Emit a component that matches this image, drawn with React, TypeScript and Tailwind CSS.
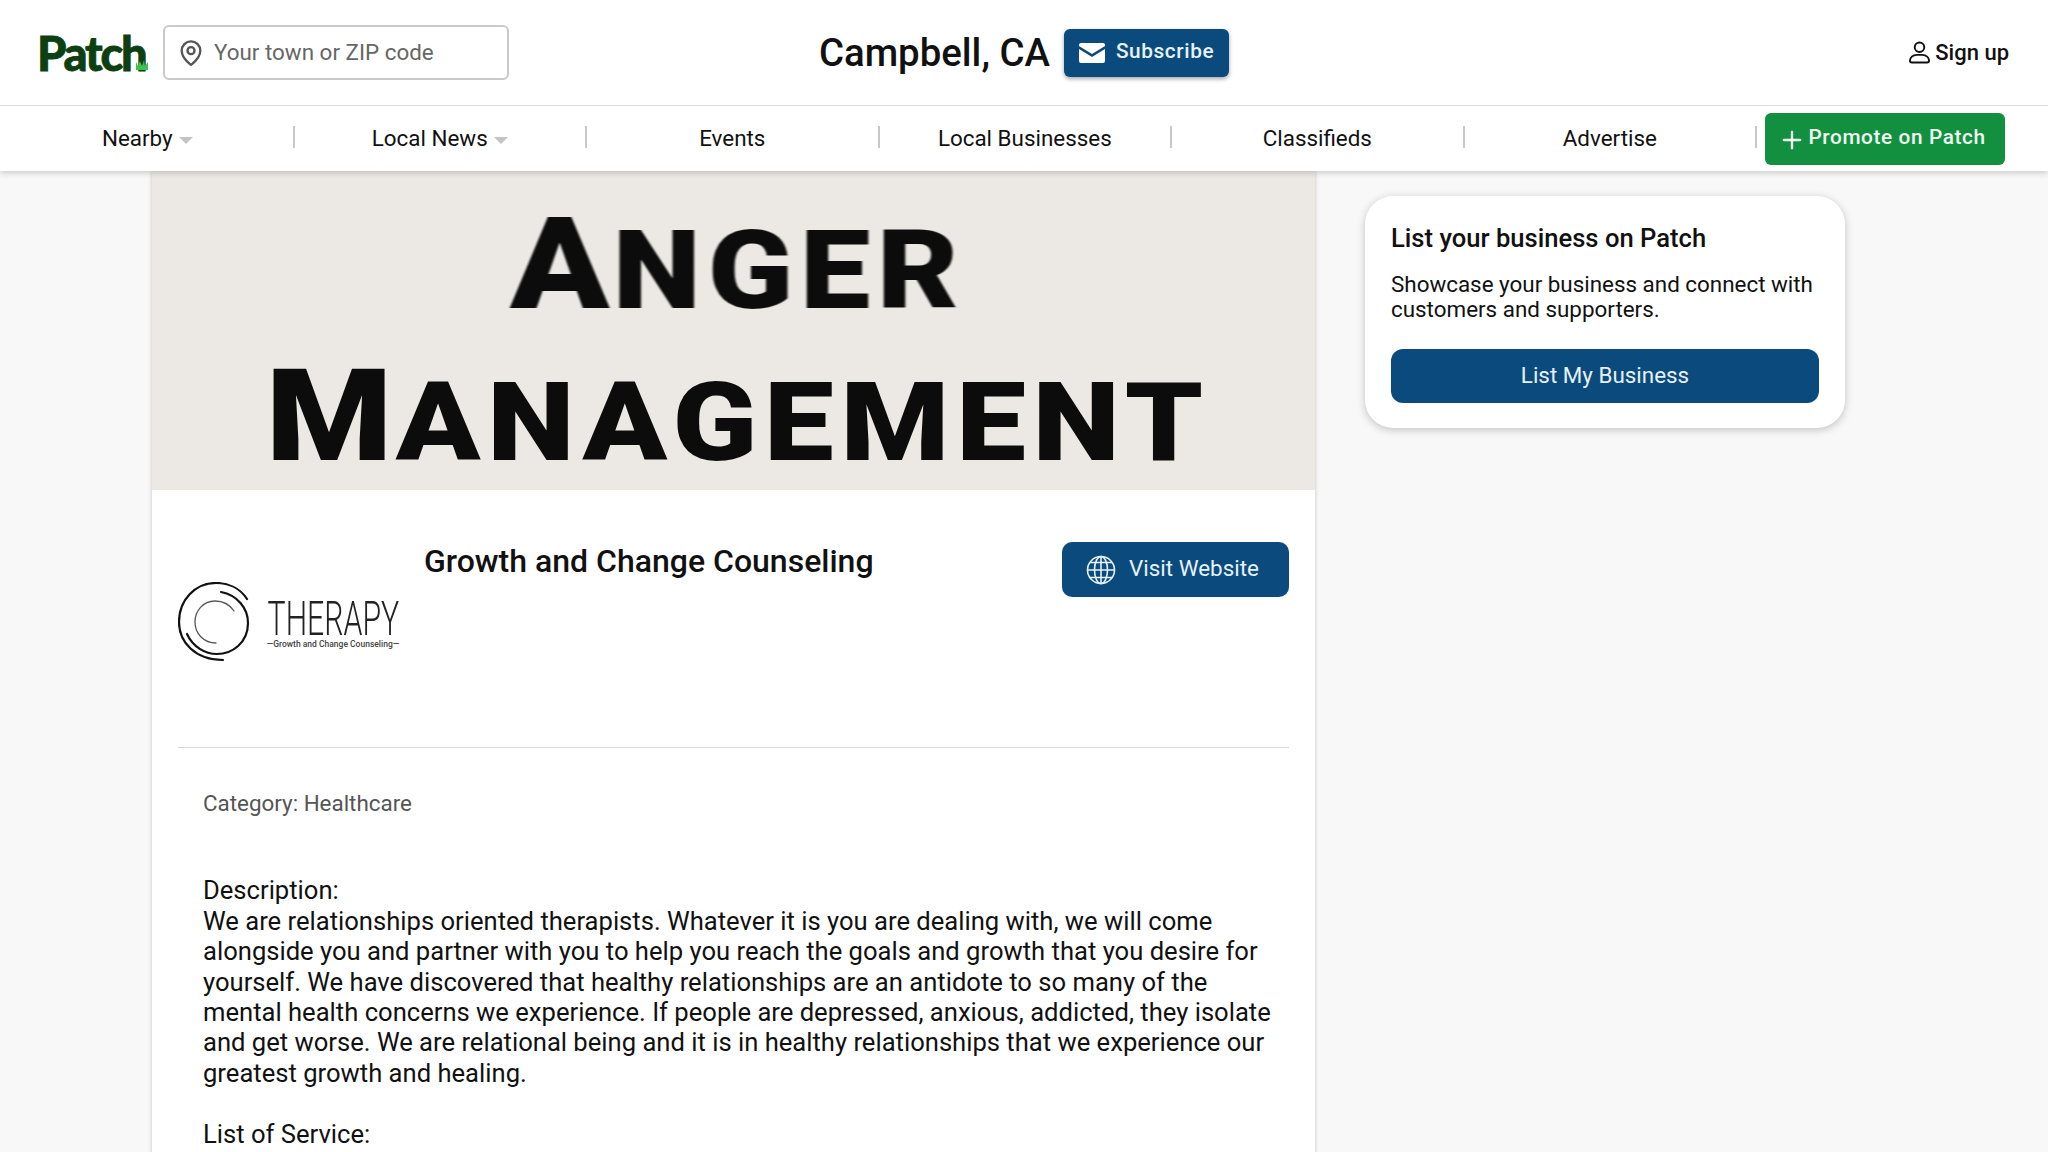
import { MapPin, Plus } from 'lucide-react'

const navItems = [
  { label: 'Nearby', caret: true },
  { label: 'Local News', caret: true },
  { label: 'Events' },
  { label: 'Local Businesses' },
  { label: 'Classifieds' },
  { label: 'Advertise' },
]

const description = [
  'We are relationships oriented therapists. Whatever it is you are dealing with, we will come',
  'alongside you and partner with you to help you reach the goals and growth that you desire for',
  'yourself. We have discovered that healthy relationships are an antidote to so many of the',
  'mental health concerns we experience. If people are depressed, anxious, addicted, they isolate',
  'and get worse. We are relational being and it is in healthy relationships that we experience our',
  'greatest growth and healing.',
]

function MailIcon() {
  return (
    <svg viewBox="0 0 26 20" className="h-[20px] w-[26px]">
      <path d="M2 0h22a2 2 0 0 1 2 2v1L13 11 0 3V2a2 2 0 0 1 2-2z" fill="#fff" />
      <path d="M0 6l13 8 13-8v12a2 2 0 0 1-2 2H2a2 2 0 0 1-2-2z" fill="#fff" />
    </svg>
  )
}

function UserIcon() {
  return (
    <svg viewBox="0 0 22 24" className="h-[24px] w-[21px]" fill="none" stroke="#111" strokeWidth="2">
      <circle cx="11" cy="7" r="5" />
      <path d="M3 23h16a2 2 0 0 0 2-2c0-3-3-6-7-6H8c-4 0-7 3-7 6a2 2 0 0 0 2 2z" />
    </svg>
  )
}

function GlobeIcon() {
  return (
    <svg viewBox="0 0 30 30" className="h-[30px] w-[30px]" fill="none" stroke="#e6f1f8" strokeWidth="1.6">
      <circle cx="15" cy="15" r="13.5" />
      <ellipse cx="15" cy="15" rx="6.5" ry="13.5" />
      <path d="M15 1.5v27M1.5 15h27M4 7.5h22M4 22.5h22" />
    </svg>
  )
}

function TherapyLogo() {
  return (
    <div className="flex items-center gap-[18px]">
      <svg viewBox="0 0 72 80" className="h-[80px] w-[72px]" fill="none" stroke="#111" strokeLinecap="round">
        <path d="M69 17C62 6 50 1 38 1 17 1 1 18 1 40c0 20 16 38 44 38" strokeWidth="2.2" />
        <path d="M43 10c16 3 27 16 27 31 0 20-16 31-31 31-12 0-24-7-30-20" strokeWidth="2.2" />
        <path d="M56 29c-4-6-11-10-19-10-12 0-20 10-20 21 0 12 9 21 21 21" strokeWidth="1.3" stroke="#555" />
      </svg>
      <div className="mt-[6px] flex w-[130px] flex-col items-center">
        <span className="origin-center scale-x-[0.63] text-[48px] leading-[36px] font-light whitespace-nowrap text-[#222]">
          THERAPY
        </span>
        <span className="mt-[2px] text-[8.5px] leading-[11px] font-medium whitespace-nowrap text-[#444]">
          —Growth and Change Counseling—
        </span>
      </div>
    </div>
  )
}

function Banner() {
  return (
    <div className="flex h-[319px] flex-col items-center bg-[#ece9e4] pl-[8px] font-black text-[#0c0c0c]">
      <div className="mt-[35px] flex h-[116px] scale-x-[1.14] items-baseline blur-[0.7px]">
        <span className="text-[128px] leading-[116px] tracking-[3px]">A</span>
        <span className="text-[110px] leading-[116px] tracking-[6px]">NGER</span>
      </div>
      <div className="mt-[36px] flex h-[116px] scale-x-[1.13] items-baseline blur-[0.7px]">
        <span className="text-[128px] leading-[116px] tracking-[3px]">M</span>
        <span className="text-[110px] leading-[116px] tracking-[6px]">ANAGEMENT</span>
      </div>
    </div>
  )
}

export default function App() {
  return (
    <div className="h-[1152px] overflow-hidden bg-[#f8f8f8] font-['Roboto',sans-serif] text-[#111]">
      <header className="relative z-10 bg-white shadow-[0_2px_6px_rgba(0,0,0,0.18)]">
        {/* top row */}
        <div className="grid h-[106px] grid-cols-[1fr_auto_1fr] items-center border-b border-[#dcdcdc] pr-[39px] pl-[37px]">
          <div className="flex items-center gap-[15px]">
            <div className="relative w-[111px] font-['Lato',sans-serif] text-[47px] leading-[50px] font-black tracking-[-2.2px] text-[#0d3f12] [-webkit-text-stroke:0.8px_#0d3f12]">
              Patch
              <svg viewBox="0 0 12 10" className="absolute right-0 bottom-[8px] h-[10px] w-[12px]" fill="#3fc14f">
                <path d="M0 10V2l2 4 2-5 2 5 2-6 1 6 3-4v8z" />
              </svg>
            </div>
            <div className="flex h-[55px] w-[346px] items-center gap-[9px] rounded-[6px] border-2 border-[#c9c9c9] pl-[12px]">
              <MapPin className="h-[28px] w-[28px] text-[#555]" strokeWidth={2} />
              <span className="text-[22.4px] text-[#666]">Your town or ZIP code</span>
            </div>
          </div>
          <div className="ml-[2px] flex items-center gap-[14px]">
            <h1 className="text-[38.4px] leading-[48px] font-medium">Campbell, CA</h1>
            <button className="flex h-[48px] w-[165px] items-center justify-center gap-[11px] rounded-[6px] bg-[#0b4a7d] text-[20.8px] font-medium tracking-[0.6px] text-[#e6f3fb] shadow-[0_2px_4px_rgba(0,0,0,0.35)]">
              <MailIcon />
              <span className="-mt-[2px]">Subscribe</span>
            </button>
          </div>
          <div className="-mt-[1px] flex items-center justify-end gap-[5px] text-[22px] font-medium">
            <UserIcon />
            Sign up
          </div>
        </div>
        {/* nav */}
        <nav className="flex h-[65px] items-center pr-[43px] pl-[2px]">
          {navItems.map((item) => (
            <div key={item.label} className="flex w-[292.7px] items-center">
              <div className="mt-[1px] flex flex-1 items-center justify-center gap-[6px] text-[22.4px]">
                {item.label}
                {item.caret && (
                  <span className="mt-[4px] h-0 w-0 border-x-[7px] border-t-[7px] border-x-transparent border-t-[#c4c4c4]" />
                )}
              </div>
              <span className="-mt-[3px] h-[22px] w-[2px] bg-[#c8c8c8]" />
            </div>
          ))}
          <button className="ml-[8px] flex h-[52px] w-[240px] items-center justify-center gap-[2px] rounded-[6px] bg-[#13903f] pr-[6px] text-[20.8px] font-medium tracking-[0.6px] text-[#eefaf1]">
            <Plus className="mt-[3px] h-[28px] w-[28px]" strokeWidth={2} />
            <span className="-mt-[2px]">Promote on Patch</span>
          </button>
        </nav>
      </header>

      <main className="flex gap-[50px] pl-[152px]">
        <article className="min-h-[1000px] w-[1163px] bg-white shadow-[0_0_4px_rgba(0,0,0,0.22)]">
          <Banner />
          <div className="px-[26px]">
            <div className="flex h-[258px] border-b border-[#d8d8d8] pt-[52px]">
              <div className="mt-[40px] w-[246px]">
                <TherapyLogo />
              </div>
              <h2 className="flex-1 text-[32px] leading-[38px] font-medium">Growth and Change Counseling</h2>
              <button className="flex h-[55px] w-[227px] items-center justify-center gap-[13px] rounded-[10px] bg-[#0b4a7d] pr-[6px] text-[22.4px] text-[#e6f1f8]">
                <GlobeIcon />
                <span className="-mt-[1px]">Visit Website</span>
              </button>
            </div>
            <div className="px-[25px] pt-[40px] text-[25.6px] leading-[30.4px]">
              <p className="text-[22.4px] text-[#555]">Category: Healthcare</p>
              <p className="mt-[57px]">Description:</p>
              {description.map((line) => (
                <p key={line} className="whitespace-nowrap">
                  {line}
                </p>
              ))}
              <p className="mt-[30.4px]">List of Service:</p>
            </div>
          </div>
        </article>

        <aside className="mt-[25px] h-[232px] w-[480px] rounded-[28px] bg-white p-[26px] shadow-[0_2px_8px_rgba(0,0,0,0.22)]">
          <h3 className="text-[25.6px] leading-[32px] font-medium">List your business on Patch</h3>
          <p className="mt-[18px] text-[22.4px] leading-[25px]">
            Showcase your business and connect with customers and supporters.
          </p>
          <button className="mt-[27px] h-[54px] w-full rounded-[12px] bg-[#0b4a7d] text-[22.4px] text-[#e6f1f8]">
            List My Business
          </button>
        </aside>
      </main>
    </div>
  )
}
